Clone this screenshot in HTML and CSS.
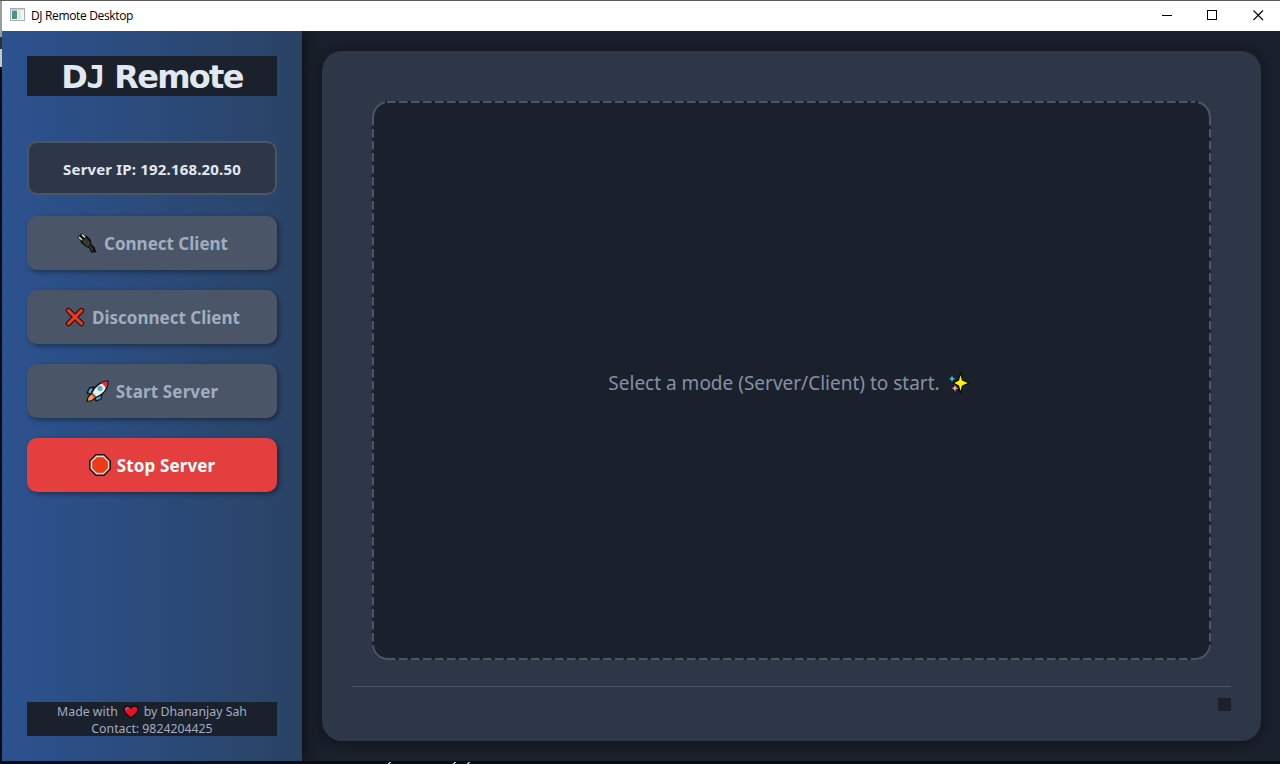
FILE: index.html
```html
<!DOCTYPE html>
<html lang="en">
<head>
<meta charset="utf-8">
<title>DJ Remote Desktop</title>
<link rel="stylesheet" href="styles.css">
</head>
<body>
<div class="window">
  <header class="titlebar">
    <svg class="app-icon" width="15" height="13" viewBox="0 0 15 13"><rect x=".5" y=".5" width="14" height="12" fill="#f4f4f4" stroke="#a9adb5"/><rect x="2" y="2.500" width="5" height="8.500" fill="#4f9283"/><rect x="8" y="2.500" width="3" height="8.500" fill="#dce3e3"/><path d="M1 1.500h13" stroke="#c9d2dc"/></svg>
    <span class="app-name">DJ Remote Desktop</span>
    <div class="controls">
      <svg width="46" height="30" viewBox="0 0 46 30"><path d="M18 14.500h10" stroke="#000"/></svg>
      <svg width="46" height="30" viewBox="0 0 46 30"><rect x="17.500" y="9.500" width="9" height="9" fill="none" stroke="#000"/></svg>
      <svg width="46" height="30" viewBox="0 0 46 30"><path d="M17.500 9.500l9.500 9.500M27 9.500L17.500 19" stroke="#000" fill="none" stroke-width="1.100"/></svg>
    </div>
  </header>
  <div class="body">
    <aside class="sidebar">
      <h1 class="brand">D<span class="brand-j">J</span> Remote</h1>
      <div class="ip">Server IP: 192.168.20.50</div>
      <button class="btn connect">
        <svg width="22" height="22" viewBox="0 0 22 22"><path d="M1.500 5L6 1l2.500 2.500L11 4l4 4 .5 4 3 3 2 5.500h-5.500L13 16l-3-1-5-4-1-3z" fill="#111"/><path d="M3 5l3 3M6 2.500l3 3" stroke="#ddd" stroke-width="1.500"/><path d="M6.500 8.500L10 6l4 4-.5 3 3 3 1 3-2-.5-2-4-3-.5-3.500-3.500z" fill="#3a3935"/></svg>
        <span>Connect Client</span>
      </button>
      <button class="btn disconnect">
        <svg width="22" height="22" viewBox="0 0 22 22"><path d="M4.500 4.500l13 13M17.500 4.500l-13 13" stroke="#2d1512" stroke-width="5.400" stroke-linecap="round"/><path d="M4.500 4.500l13 13M17.500 4.500l-13 13" stroke="#f03a17" stroke-width="3" stroke-linecap="round"/></svg>
        <span>Disconnect Client</span>
      </button>
      <button class="btn start">
        <svg width="24" height="24" viewBox="0 0 24 24"><path d="M8 8l-4.500 1L1 14l4 1zM16 15l-1 5-5 2-1-4z" fill="#3cb8d8" stroke="#111" stroke-width="1.300" stroke-linejoin="round"/><path d="M6 14L2 18l-1 4.500 5-1 4-3.500z" fill="#f6a13a" stroke="#111" stroke-width="1.200" stroke-linejoin="round"/><path d="M5.500 14.500C8 8 13 3 22 2c0 8-4.500 13.500-12 16.500z" fill="#e7edf1" stroke="#111" stroke-width="1.300" stroke-linejoin="round"/><path d="M15.500 3.700Q18.500 2.500 21.500 2.500 21.500 6 20 9z" fill="#e52c3c"/><circle cx="14" cy="9.500" r="2.400" fill="#42acd0" stroke="#9baab5" stroke-width=".7"/><path d="M6.500 15l3 3" stroke="#df3a42" stroke-width="2"/></svg>
        <span>Start Server</span>
      </button>
      <button class="btn stop">
        <svg width="22" height="22" viewBox="0 0 22 22"><path d="M7 .8h8L21.200 7v8L15 21.200H7L.8 15V7z" fill="#e5d6cd" stroke="#241312" stroke-width="1.600"/><path d="M7.800 3.500h6.400l4.300 4.300v6.400l-4.300 4.300H7.800l-4.300-4.300V7.800z" fill="#f03a17" stroke="#c33119" stroke-width=".5"/></svg>
        <span>Stop Server</span>
      </button>
      <footer class="credit">
        <div class="line made"><span>Made with</span><svg width="16" height="14" viewBox="0 0 16 14"><path d="M8 13C4 9.500 1 7.500 1 4.300 1 .5 6 0 8 3c2-3 7-2.500 7 1.300C15 7.500 12 9.500 8 13z" fill="#e81224" stroke="#090d13" stroke-width="1.200"/><path d="M3 5c0-2 1.500-2.500 2.500-2" stroke="#ff6670" fill="none"/></svg><span>by Dhananjay Sah</span></div>
        <div class="line contact">Contact: 9824204425</div>
      </footer>
    </aside>
    <main class="content">
      <section class="card">
        <div class="screen">
          <svg class="frame" width="839" height="559" viewBox="0 0 839 559" fill="none" stroke="#4a5568" stroke-width="2">
            <path d="M1 16A15 15 0 0 1 13 1.300M826 1.300A15 15 0 0 1 838 16M838 544A15 15 0 0 1 823 558H820M16 558A15 15 0 0 1 1 544"/>
            <path d="M15 1H823" stroke-dasharray="8.500 3.500"/>
            <path d="M15 558H820" stroke-dasharray="8.500 3.500"/>
            <path d="M1 16V542" stroke-dasharray="8.500 3.500"/>
            <path d="M838 16V542" stroke-dasharray="8.500 3.500"/>
          </svg>
          <span class="hint">Select a mode (Server/Client) to start.</span>
          <svg width="22" height="22" viewBox="0 0 22 22"><path d="M12.500 .8l2 7.200 6.700 3-6.700 3-2 7.200-2-7.200L5 11l5.500-3z" fill="#fff100" stroke="#070a0d" stroke-width="1.200"/><path d="M4 2.500l1.200 3 3 1.200-3 1.200L4 11 2.800 7.900 0 6.700l2.800-1.200z" fill="#42b9d7" stroke="#070a0d" stroke-width=".5"/><path d="M7 12l1.200 3 2.800 1.200-2.800 1.200L7 20.500l-1.200-3.100L3 16.200 5.800 15z" fill="#f3a2c3" stroke="#070a0d" stroke-width=".5"/></svg>
        </div>
        <div class="status"><i class="grip"></i></div>
      </section>
    </main>
  </div>
</div>
</body>
</html>
```
FILE: styles.css
```css
* { box-sizing: border-box; }
body {
  margin: 0;
  width: 1280px;
  height: 764px;
  padding: 1px 0 3px 2px;
  overflow: hidden;
  /* slivers of the desktop behind the window */
  background:
    linear-gradient(#9a9d9c 0 36px, #2a2f30 36px 48px, #c9cbc3 48px 66px) 0 1px / 2px 66px no-repeat,
    linear-gradient(115deg, transparent 30%, #b9bcc0 30% 70%, transparent 70%) 387px 762px / 5px 2px no-repeat,
    linear-gradient(115deg, transparent 30%, #b9bcc0 30% 70%, transparent 70%) 452px 762px / 5px 2px no-repeat,
    linear-gradient(115deg, transparent 30%, #b9bcc0 30% 70%, transparent 70%) 466px 762px / 5px 2px no-repeat,
    linear-gradient(#5b5b5b 0 1px, #080c14 1px);
  font-family: "Noto Sans", sans-serif;
}
svg { display: block; flex: none; }
.window { height: 760px; display: flex; flex-direction: column; overflow: hidden; background: #1a202c; }
.titlebar { position: relative; z-index: 1; height: 30px; flex: none; display: flex; align-items: center; padding-left: 8px; background: #fff; }
.app-icon { margin-top: -3px; }
.app-name { margin-left: 6px; font-family: "Open Sans", sans-serif; font-size: 12px; line-height: 28px; letter-spacing: -.35px; color: #000; white-space: nowrap; }
.controls { display: flex; margin-left: auto; margin-right: -2px; }
.body { flex: 1; display: flex; min-height: 0; }
.sidebar {
  width: 300px;
  flex: none;
  display: flex;
  flex-direction: column;
  padding: 25px;
  background: linear-gradient(90deg, #2c5290, #2a4365);
  box-shadow: 2px 0 12px rgba(0, 0, 0, .55);
}
.brand {
  margin: 0 0 45px;
  height: 40px;
  background: #1a202c;
  color: #e2e8f0;
  font: bold 32px/42px "DejaVu Sans", sans-serif;
  letter-spacing: -1.7px;
  text-align: center;
  white-space: nowrap;
}
.brand-j { font-family: "DejaVu Sans Mono", monospace; margin-right: 1px; }
.ip {
  height: 54px;
  margin-bottom: 21px;
  border: 2px solid #4a5568;
  border-radius: 10px;
  background: #2d3748;
  color: #e2e8f0;
  font-size: 15px;
  font-weight: 700;
  line-height: 52px;
  letter-spacing: .17px;
  text-align: center;
  white-space: nowrap;
}
.btn {
  height: 54px;
  flex: none;
  margin: 0 0 20px;
  padding: 0;
  border: 0;
  border-radius: 10px;
  display: flex;
  align-items: center;
  justify-content: center;
  gap: 6px;
  background: #4a5568;
  color: #a0aec0;
  box-shadow: 2px 2px 5px rgba(0, 0, 0, .4);
  font: 700 17px/54px "Noto Sans", sans-serif;
  white-space: nowrap;
}
.btn span { padding-top: 2px; line-height: 52px; }
.start, .stop { letter-spacing: .12px; }
.stop { background: #e53e3e; color: #fff; }
.credit { margin-top: auto; height: 34px; background: #1a202c; color: #a0aec0; font-size: 12.3px; line-height: 17px; text-align: center; white-space: nowrap; }
.line { height: 17px; line-height: 19px; }
.made { display: flex; justify-content: center; align-items: center; gap: 5px; }
.made span { padding-top: 2px; }
.made svg { margin-top: 2px; }
.content { flex: 1; display: flex; padding: 20px 19px 20px 20px; }
.card {
  flex: 1;
  display: flex;
  flex-direction: column;
  padding: 50px 30px 0;
  border-radius: 20px;
  background: #2d3748;
  box-shadow: 0 1px 14px rgba(0, 0, 0, .45);
}
.screen {
  position: relative;
  height: 559px;
  margin: 0 20px;
  padding: 4px 5px 0 0;
  display: flex;
  align-items: center;
  justify-content: center;
  gap: 8px;
  border-radius: 16px;
  background: #1a202c;
  color: #8791a1;
}
.frame { position: absolute; inset: 0; }
.hint { font-size: 19px; line-height: 30px; white-space: nowrap; }
.status { margin-top: 26px; border-top: 1px solid #4a5568; padding-top: 11px; display: flex; justify-content: flex-end; }
.grip { width: 13px; height: 13px; background: #1a202c; }
```
